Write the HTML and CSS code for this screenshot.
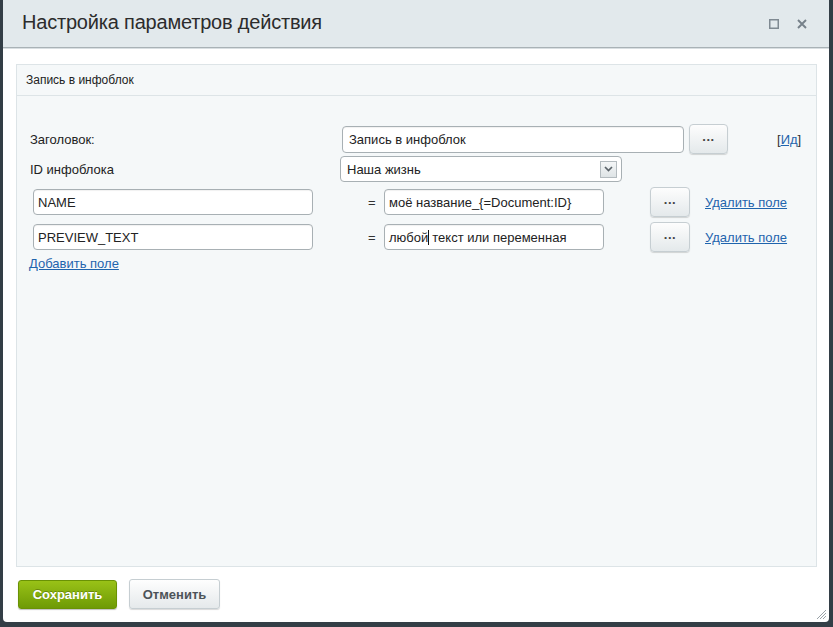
FILE: index.html
```html
<!DOCTYPE html>
<html lang="ru">
<head>
<meta charset="utf-8">
<title>Настройка параметров действия</title>
<link rel="stylesheet" href="styles.css">
</head>
<body>
<div class="dialog">
  <div class="dlg-head">
    <div class="dlg-title">Настройка параметров действия</div>
    <div class="dlg-icons">
      <svg class="ico" width="10" height="10" viewBox="0 0 10 10"><rect x="0.75" y="0.75" width="8.5" height="8.5" fill="none" stroke="#7f8a92" stroke-width="1.5"/></svg>
      <svg class="ico" width="10" height="10" viewBox="0 0 10 10"><path d="M1 1L9 9M9 1L1 9" stroke="#76818a" stroke-width="1.9"/></svg>
    </div>
  </div>
  <div class="dlg-body">
    <div class="panel">
      <div class="panel-head">Запись в инфоблок</div>
      <div class="panel-body">
        <div class="row row1">
          <div class="lbl lbl1">Заголовок:</div>
          <div class="inp inp-title">Запись в инфоблок</div>
          <div class="dots-btn">...</div>
          <div class="id-link">[<a href="#">Ид</a>]</div>
        </div>
        <div class="row row2">
          <div class="lbl lbl2">ID инфоблока</div>
          <div class="select">
            <span>Наша жизнь</span>
            <span class="sel-arrow"><svg width="9" height="6" viewBox="0 0 9 6"><path d="M1 1L4.5 4.5L8 1" fill="none" stroke="#5b6369" stroke-width="1.7"/></svg></span>
          </div>
        </div>
        <div class="row row3">
          <div class="inp inp-field">NAME</div>
          <div class="eq">=</div>
          <div class="inp inp-val">моё название_{=Document:ID}</div>
          <div class="dots-btn dots-sm">...</div>
          <a class="del-link" href="#">Удалить поле</a>
        </div>
        <div class="row row4">
          <div class="inp inp-field">PREVIEW_TEXT</div>
          <div class="eq">=</div>
          <div class="inp inp-val">любой<span class="caret"></span>текст или переменная</div>
          <div class="dots-btn dots-sm">...</div>
          <a class="del-link" href="#">Удалить поле</a>
        </div>
        <a class="add-link" href="#">Добавить поле</a>
      </div>
    </div>
  </div>
  <div class="dlg-foot">
    <div class="btn btn-save">Сохранить</div>
    <div class="btn btn-cancel">Отменить</div>
    <svg class="grip" width="12" height="12" viewBox="0 0 12 12"><path d="M11 2L2 11M11 5L5 11M11 8L8 11" stroke="#9aa2a7" stroke-width="1"/></svg>
  </div>
</div>
</body>
</html>
```

FILE: styles.css
```css
* { box-sizing: border-box; }
html, body { margin: 0; padding: 0; }
body {
  background: #333e46;
  width: 833px;
  height: 627px;
  overflow: hidden;
  font-family: "Liberation Sans", Arial, sans-serif;
  font-size: 13px;
  color: #222;
}
.dialog {
  margin: 0 4px 0 3px;
  height: 622px;
  background: #fff;
  border-radius: 0 0 4px 4px;
  display: flex;
  flex-direction: column;
  position: relative;
}
.dlg-head {
  height: 49px;
  background: #e2e9ec;
  border-bottom: 1px solid #a9b2b6;
  box-shadow: 0 1px 0 #d9dfe2;
  display: flex;
  align-items: center;
  padding: 0 22px 2px 19px;
}
.dlg-title {
  flex: 1;
  font-size: 20px;
  color: #2c2c2c;
  letter-spacing: -0.2px;
}
.dlg-icons { display: flex; gap: 18px; align-items: center; padding-top: 2px; }
.ico { display: block; }
.dlg-body {
  padding: 16px 12px 0 13px;
  flex: 1;
  display: flex;
}
.panel {
  flex: 1;
  background: #f5f8f9;
  border: 1px solid #dde4e7;
  height: 503px;
}
.panel-head {
  height: 31px;
  border-bottom: 1px solid #dde4e7;
  padding: 8px 0 0 9px;
  font-size: 12px;
  color: #222;
}
.panel-body { padding: 28px 0 0 13px; }
.row { display: flex; align-items: center; height: 30px; }
.row3 { margin-top: 3px; padding-left: 3px; }
.row4 { margin-top: 5px; padding-left: 3px; }
.lbl { color: #222; }
.lbl1 { width: 312px; }
.lbl2 { width: 310px; }
.inp {
  height: 27px;
  background: #fff;
  border: 1px solid #a8b0b4;
  border-radius: 4px;
  box-shadow: inset 0 1px 1px rgba(0,0,0,0.06);
  padding: 5px 0 0 6px;
  color: #222;
  white-space: nowrap;
}
.inp-title { width: 342px; }
.inp-field { width: 280px; height: 26px; padding-left: 4px; }
.inp-val { width: 220px; height: 26px; padding-left: 4px; }
.eq { width: 71px; padding-left: 55px; color: #333; }
.caret { display: inline-block; width: 1px; height: 15px; background: #111; vertical-align: -3px; margin-right: 3px; }
.dots-btn {
  width: 39px;
  height: 30px;
  margin-left: 5px;
  border: 1px solid #c6ced2;
  border-radius: 4px;
  background: linear-gradient(#fdfdfd, #e4e9eb);
  box-shadow: 0 1px 1px rgba(0,0,0,0.15);
  text-align: center;
  color: #444;
  font-size: 13px;
  font-weight: bold;
  line-height: 24px;
  letter-spacing: 0.5px;
}
.dots-sm { width: 40px; margin-left: 46px; }
.id-link { margin-left: 49px; color: #333; }
a { color: #1f64ad; }
.del-link { margin-left: 15px; color: #1f64ad; text-decoration: underline; }
.select {
  width: 282px;
  height: 26px;
  background: #fff;
  border: 1px solid #a8b0b4;
  border-radius: 4px;
  display: flex;
  align-items: center;
  justify-content: space-between;
  padding: 0 4px 0 6px;
  color: #222;
}
.sel-arrow {
  width: 17px;
  height: 17px;
  border: 1px solid #b4bbbf;
  background: linear-gradient(#f4f6f7, #dfe4e6);
  display: flex;
  align-items: center;
  justify-content: center;
}
.sel-arrow svg { display: block; }
.add-link { display: inline-block; margin-top: 4px; margin-left: -1px; }
.dlg-foot {
  height: 55px;
  display: flex;
  align-items: flex-start;
  padding: 12px 0 0 15px;
  gap: 12px;
}
.btn {
  height: 30px;
  border-radius: 3px;
  font-weight: bold;
  font-size: 13px;
  text-align: center;
  line-height: 29px;
}
.btn-save {
  width: 99px;
  margin-top: 1px;
  background: linear-gradient(#99c217, #6e9a05);
  border: 1px solid #6a9204;
  color: #fff;
  text-shadow: 0 -1px 0 rgba(0,0,0,0.25);
  box-shadow: 0 1px 1px rgba(0,0,0,0.25);
  height: 29px;
  line-height: 27px;
}
.btn-cancel {
  width: 91px;
  background: linear-gradient(#fefefe, #e5e9eb);
  border: 1px solid #c6ced2;
  color: #4d5358;
  box-shadow: 0 1px 1px rgba(0,0,0,0.15);
}
.grip { position: absolute; right: 2px; bottom: 2px; }
```
